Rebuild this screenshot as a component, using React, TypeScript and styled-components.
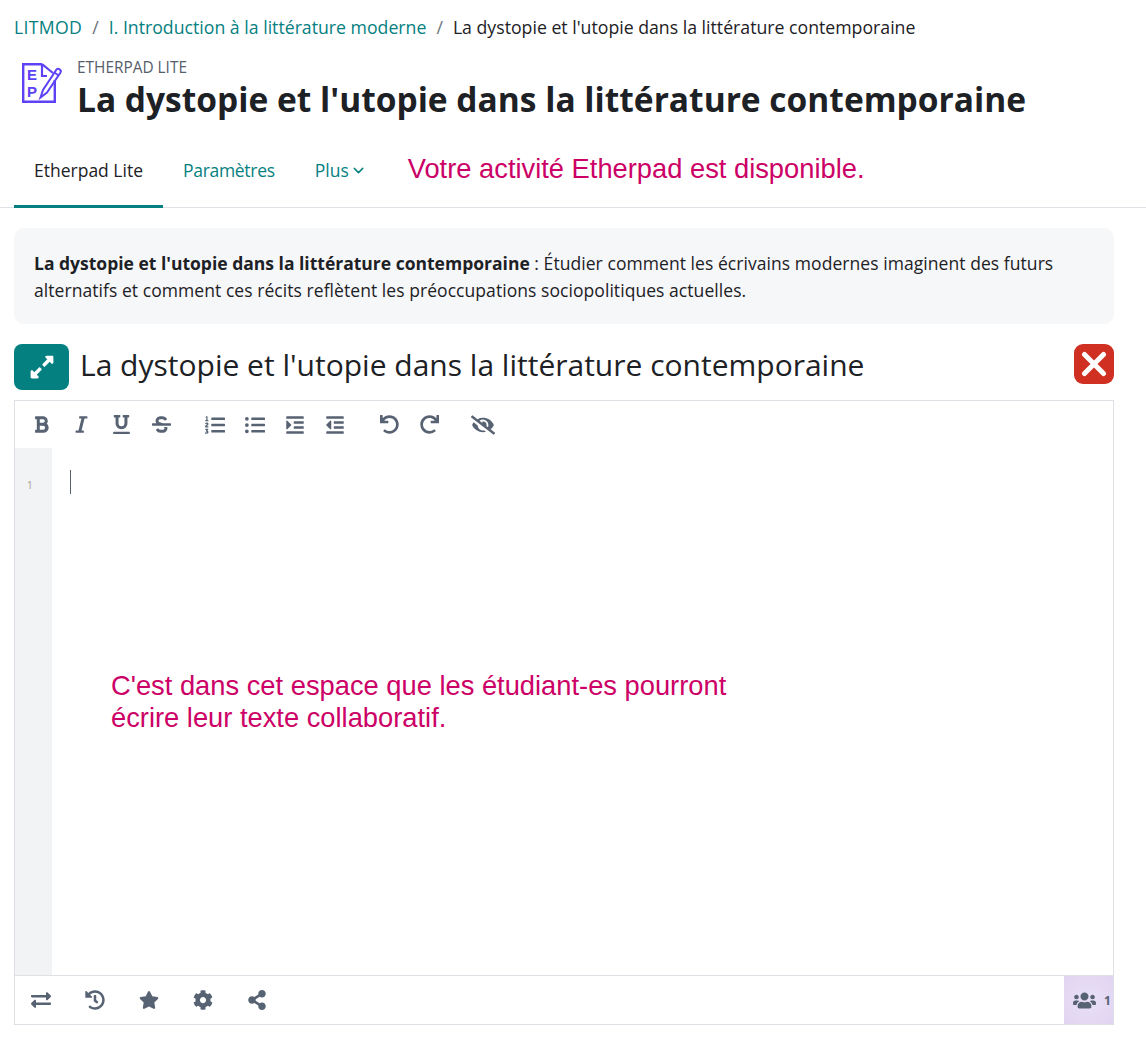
import * as React from 'react';
import styled, { createGlobalStyle } from 'styled-components';
import { ChevronDown } from 'lucide-react';
import {
  FaBold, FaItalic, FaUnderline, FaStrikethrough, FaListOl, FaListUl, FaIndent, FaOutdent,
  FaUndo, FaRedo, FaEyeSlash, FaExchangeAlt, FaHistory, FaStar, FaCog, FaShareAlt, FaUsers,
  FaExpandAlt,
} from 'react-icons/fa';

const GlobalStyle = createGlobalStyle`
  html, body { margin: 0; padding: 0; background: #fff; }
  body { font-family: "Open Sans", "Noto Sans", sans-serif; color: #1d2125; }
`;

const TEAL = '#058081';
const SLATE = '#576273';
const PURPLE = '#5d43f5';
const TITLE = "La dystopie et l'utopie dans la littérature contemporaine";

const Page = styled.div`
  width: 1146px;
  height: 1046px;
  overflow: hidden;
`;

const Breadcrumb = styled.nav`
  display: flex;
  align-items: center;
  height: 24px;
  padding: 15px 0 0 14px;
  font-size: 17.7px;
`;

const CrumbLink = styled.span<{ $spacing?: number }>`
  color: ${TEAL};
  letter-spacing: ${(p) => p.$spacing ?? 0}px;
`;

const CrumbSep = styled.span`
  color: #6a737b;
  margin: 0 10px;
`;

const Header = styled.header`
  display: flex;
  align-items: flex-start;
  height: 64px;
  margin-top: 20px;
  padding-left: 22px;
`;

const LogoSvg = styled.svg`
  flex: none;
  margin-top: 4px;
`;

const LogoLetter = styled.text`
  font-family: "Liberation Sans", sans-serif;
  font-size: 15px;
  font-weight: 700;
  fill: ${PURPLE};
  stroke: none;
`;

const HeaderText = styled.div`
  margin-left: 14px;
`;

const ModName = styled.div`
  font-size: 15.4px;
  line-height: 17px;
  color: #56606a;
`;

const PageTitle = styled.h1`
  margin: 0;
  font-size: 33.5px;
  line-height: 46px;
  font-weight: 700;
  white-space: nowrap;
`;

const Tabs = styled.div`
  display: flex;
  align-items: stretch;
  height: 64px;
  margin-top: 20px;
  padding-left: 14px;
  border-bottom: 1px solid #dee2e6;
`;

const Tab = styled.div<{ $active?: boolean; $spacing?: number }>`
  display: flex;
  align-items: center;
  gap: 1px;
  padding: 0 20px 8px;
  font-size: 17.5px;
  letter-spacing: ${(p) => p.$spacing ?? 0}px;
  color: ${(p) => (p.$active ? '#1d2125' : TEAL)};
  border-bottom: 3px solid ${(p) => (p.$active ? TEAL : 'transparent')};
  margin-bottom: -1px;
`;

const Notice = styled.div`
  display: flex;
  align-items: center;
  margin-left: 21px;
  padding-bottom: 13px;
  font-family: "Liberation Sans", Arial, sans-serif;
  font-size: 27.3px;
  color: #cc0066;
`;

const Intro = styled.section`
  width: 1060px;
  height: 54px;
  margin: 20px 0 0 14px;
  padding: 22px 20px 20px;
  background: #f6f7f9;
  border-radius: 10px;
  font-size: 17.5px;
  line-height: 27px;
  letter-spacing: 0.06px;
  white-space: nowrap;
`;

const IntroLead = styled.strong`
  letter-spacing: 0;
`;

const TitleRow = styled.div`
  display: flex;
  align-items: flex-start;
  width: 1100px;
  height: 56px;
  margin: 20px 0 0 14px;
`;

const ExpandButton = styled.div`
  display: flex;
  align-items: center;
  justify-content: center;
  width: 55px;
  height: 46px;
  border-radius: 8px;
  background: ${TEAL};
  color: #fff;
  font-size: 26px;
`;

const PadTitle = styled.div`
  flex: 1;
  margin-left: 11px;
  font-size: 30px;
  line-height: 42px;
`;

const CloseButton = styled.div`
  display: flex;
  align-items: center;
  justify-content: center;
  width: 40px;
  height: 40px;
  border-radius: 9px;
  background: #cf3021;
`;

const Editor = styled.div`
  position: relative;
  display: flex;
  flex-direction: column;
  width: 1098px;
  height: 623px;
  margin-left: 14px;
  border: 1px solid #dee0e5;
`;

const Toolbar = styled.div`
  display: flex;
  align-items: center;
  height: 47px;
  padding-left: 6px;
  flex: none;
`;

const ToolGroup = styled.div`
  display: flex;
  margin-right: 14px;
`;

const ToolIcon = styled.span<{ $size?: number }>`
  display: flex;
  align-items: center;
  justify-content: center;
  width: 40px;
  height: 24px;
  color: ${SLATE};
  font-size: ${(p) => p.$size ?? 19}px;
`;

const PadBody = styled.div`
  flex: 1;
  display: flex;
`;

const Gutter = styled.div`
  width: 37px;
  padding: 31px 0 0 12px;
  box-sizing: border-box;
  background: #f2f3f4;
  color: #a89a90;
  font-size: 10px;
  line-height: 12px;
`;

const Caret = styled.div`
  width: 1px;
  height: 24px;
  margin: 22px 0 0 18px;
  background: ${SLATE};
`;

const Callout = styled.div`
  position: absolute;
  left: 96px;
  top: 269px;
  font-family: "Liberation Sans", Arial, sans-serif;
  font-size: 27.3px;
  line-height: 32px;
  color: #cc0066;
`;

const Footer = styled.div`
  display: flex;
  align-items: stretch;
  justify-content: space-between;
  height: 48px;
  flex: none;
  border-top: 1px solid #dee0e5;
`;

const FooterLeft = styled.div`
  display: flex;
  align-items: center;
  gap: 14px;
  padding-left: 6px;
`;

const UserBadge = styled.div`
  display: flex;
  align-items: center;
  gap: 8px;
  width: 49px;
  padding-left: 9px;
  box-sizing: border-box;
  background: radial-gradient(circle, #e9e0f6 0%, #e1d4f2 100%);
  color: ${SLATE};
  font-size: 23px;
`;

const UserCount = styled.span`
  font-size: 12px;
  font-weight: 700;
`;

const EpLogo = () => (
  <LogoSvg width="41" height="40" viewBox="0 0 41 40" fill="none" stroke={PURPLE}>
    <path d="M20 1.2H1.2V38.8H32.8V17" strokeWidth="2.4" />
    <path d="M20 1.2V13H25M20 1.2L31 10" strokeWidth="2.2" />
    <LogoLetter x="5" y="16.5">E</LogoLetter>
    <LogoLetter x="5" y="34">P</LogoLetter>
    <path d="M18.5 34.5L21 27L34.5 6.5C36 4.5 40 7 38.5 9.5L25 29.5L18.5 34.5Z" strokeWidth="2" />
    <path d="M32.5 9.5L36.5 12.5" strokeWidth="1.6" />
  </LogoSvg>
);

export default function App() {
  return (
    <Page>
      <GlobalStyle />
      <Breadcrumb>
        <CrumbLink $spacing={0.3}>LITMOD</CrumbLink>
        <CrumbSep>/</CrumbSep>
        <CrumbLink>I. Introduction à la littérature moderne</CrumbLink>
        <CrumbSep>/</CrumbSep>
        <span>{TITLE}</span>
      </Breadcrumb>
      <Header>
        <EpLogo />
        <HeaderText>
          <ModName>ETHERPAD LITE</ModName>
          <PageTitle>{TITLE}</PageTitle>
        </HeaderText>
      </Header>
      <Tabs>
        <Tab $active>Etherpad Lite</Tab>
        <Tab $spacing={-0.3}>Paramètres</Tab>
        <Tab>Plus <ChevronDown size={17} strokeWidth={2} /></Tab>
        <Notice>Votre activité Etherpad est disponible.</Notice>
      </Tabs>
      <Intro>
        <IntroLead>{TITLE}</IntroLead> : Étudier comment les écrivains modernes imaginent des futurs<br />
        alternatifs et comment ces récits reflètent les préoccupations sociopolitiques actuelles.
      </Intro>
      <TitleRow>
        <ExpandButton><FaExpandAlt /></ExpandButton>
        <PadTitle>{TITLE}</PadTitle>
        <CloseButton>
          <svg width="26" height="26" viewBox="0 0 26 26">
            <path d="M3.5 3.5L22.5 22.5M22.5 3.5L3.5 22.5" stroke="#fff" strokeWidth="5" strokeLinecap="round" />
          </svg>
        </CloseButton>
      </TitleRow>
      <Editor>
        <Toolbar>
          <ToolGroup>
            <ToolIcon><FaBold /></ToolIcon>
            <ToolIcon><FaItalic /></ToolIcon>
            <ToolIcon><FaUnderline /></ToolIcon>
            <ToolIcon><FaStrikethrough /></ToolIcon>
          </ToolGroup>
          <ToolGroup>
            <ToolIcon $size={20}><FaListOl /></ToolIcon>
            <ToolIcon $size={20}><FaListUl /></ToolIcon>
            <ToolIcon $size={20}><FaIndent /></ToolIcon>
            <ToolIcon $size={20}><FaOutdent /></ToolIcon>
          </ToolGroup>
          <ToolGroup>
            <ToolIcon><FaUndo /></ToolIcon>
            <ToolIcon><FaRedo /></ToolIcon>
          </ToolGroup>
          <ToolIcon $size={24}><FaEyeSlash /></ToolIcon>
        </Toolbar>
        <PadBody>
          <Gutter>1</Gutter>
          <Caret />
        </PadBody>
        <Callout>
          C'est dans cet espace que les étudiant-es pourront<br />
          écrire leur texte collaboratif.
        </Callout>
        <Footer>
          <FooterLeft>
            <ToolIcon $size={20}><FaExchangeAlt /></ToolIcon>
            <ToolIcon $size={20}><FaHistory /></ToolIcon>
            <ToolIcon $size={20}><FaStar /></ToolIcon>
            <ToolIcon $size={20}><FaCog /></ToolIcon>
            <ToolIcon $size={20}><FaShareAlt /></ToolIcon>
          </FooterLeft>
          <UserBadge><FaUsers /><UserCount>1</UserCount></UserBadge>
        </Footer>
      </Editor>
    </Page>
  );
}
